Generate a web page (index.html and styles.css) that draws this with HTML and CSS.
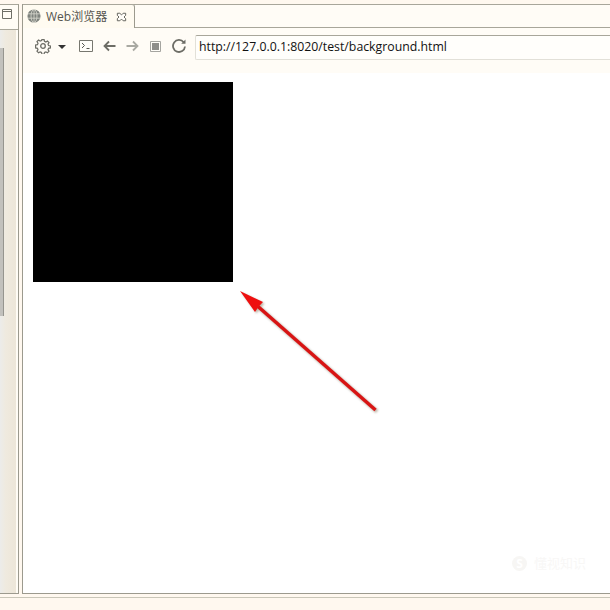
FILE: index.html
```html
<!DOCTYPE html>
<html lang="zh-CN">
<head>
<meta charset="utf-8">
<title>Web浏览器</title>
<link rel="stylesheet" href="styles.css">
</head>
<body>
<div class="workbench">
  <div class="panes">
    <aside class="side">
      <div class="side-head">
        <svg class="icon-restore" width="10" height="10" viewBox="0 0 10 10"><path d="M.5.500h9v9H.5zM.5 2.500h9" fill="none" stroke="#6e6e66"/></svg>
      </div>
      <div class="side-body"><div class="side-scroll"></div></div>
    </aside>
    <main class="main">
      <div class="tabbar">
        <div class="tab">
          <svg width="14" height="14" viewBox="0 0 16 16"><circle cx="8" cy="8" r="7.500" fill="#7f837e"/><g fill="none" stroke="#dcdcd2" stroke-width=".9"><ellipse cx="8" cy="8" rx="3.400" ry="7.500"/><path d="M8 .5v15M1 5.500h14M1 10.500h14"/></g></svg>
          <span class="tab-title">Web浏览器</span>
          <svg class="tab-close" width="11" height="10" viewBox="0 0 13 12"><path d="M1.500 1.500h3l2 2 2-2h3v2.500l-2 2 2 2v2.500h-3l-2-2-2 2h-3V8l2-2-2-2z" fill="#fffdf8" stroke="#66665f" stroke-width="1.200"/></svg>
        </div>
      </div>
      <div class="toolbar">
        <svg class="t-gear" width="16" height="16" viewBox="0 0 16 16"><g fill="none" stroke="#6d6d66" stroke-width="1.300"><circle cx="8" cy="8" r="2.300"/><path d="M6.800 1h2.400l.4 2 1.500.7 1.700-1.100 1.700 1.700-1.100 1.700.6 1.500 2 .4v2.200l-2 .4-.6 1.500 1.100 1.700-1.700 1.700-1.700-1.100-1.500.6-.4 2H6.800l-.4-2-1.500-.6-1.700 1.100-1.700-1.700 1.100-1.700-.6-1.500-2-.4V6.900l2-.4.6-1.500-1.100-1.700 1.700-1.700 1.700 1.100 1.500-.7z" transform="translate(.6 .6) scale(.925)"/></g></svg>
        <svg class="t-drop" width="8" height="4" viewBox="0 0 8 4"><path d="M0 0h8L4 4z" fill="#333"/></svg>
        <svg class="t-term" width="14" height="12" viewBox="0 0 14 12"><path d="M.5.500h13v11H.5z" fill="#fffdf8" stroke="#77776f"/><path d="M3 3l2.500 2.500L3 8M7.500 8.500h3" fill="none" stroke="#55554f"/></svg>
        <svg class="t-back" width="13" height="12" viewBox="0 0 13 12"><path d="M12.500 6H1.500M6 1.500L1.500 6 6 10.500" fill="none" stroke="#6d6d66" stroke-width="1.800"/></svg>
        <svg class="t-fwd" width="13" height="12" viewBox="0 0 13 12"><path d="M.5 6h11M7 1.500L11.500 6 7 10.500" fill="none" stroke="#a9a9a2" stroke-width="1.800"/></svg>
        <svg class="t-stop" width="11" height="11" viewBox="0 0 11 11"><path d="M.5.500h10v10H.5z" fill="#fffdf8" stroke="#a5a5a0"/><path d="M2 2h7v7H2z" fill="#8e8e8a"/></svg>
        <svg class="t-reload" width="14" height="14" viewBox="0 0 14 14"><path d="M11.700 3.200A6 6 0 1 0 13 7.500" fill="none" stroke="#6d6d66" stroke-width="1.800"/><path d="M13.500 .5v4.300H9.200z" fill="#6d6d66"/></svg>
        <div class="url">http://127.0.0.1:8020/test/background.html</div>
      </div>
      <div class="page">
        <div class="box"></div>
      </div>
      <div class="watermark">
        <div class="wm-row"><span class="wm-s">S</span><span class="wm-t">懂视知识</span></div>
      </div>
      <svg class="arrow" width="150" height="130" viewBox="0 0 150 130">
        <defs><filter id="sh" x="-20%" y="-20%" width="140%" height="140%"><feGaussianBlur stdDeviation="1.200"/></filter></defs>
        <g transform="translate(1.500 1.500)" opacity=".5" filter="url(#sh)"><path d="M135.500 119L18 15.500" stroke="#7a6a50" stroke-width="4" fill="none"/><path d="M0 0L23 11 18.700 15.500 15 21z" fill="#7a6a50"/></g>
        <path d="M135.500 119L18 15.500" stroke="#d81414" stroke-width="3.500" fill="none"/>
        <path d="M0 0L23 11 18.700 15.500 15 21z" fill="#ee0f0f"/>
      </svg>
    </main>
  </div>
  <div class="statusbar"></div>
</div>
</body>
</html>
```
FILE: styles.css
```css
html, body { margin: 0; padding: 0; }
body {
  width: 610px;
  height: 610px;
  overflow: hidden;
  background: #fff8ef;
  font-family: "Open Sans", "Noto Sans CJK SC", sans-serif;
}
svg { display: block; flex: none; }
.workbench { height: 610px; display: flex; flex-direction: column; }
.panes {
  display: flex;
  gap: 3px;
  height: 590px;
  margin-top: 4px;
  box-sizing: border-box;
}
.side {
  width: 19px;
  flex: none;
  display: flex;
  flex-direction: column;
  border-top: 1px solid #a8a69a;
  border-right: 1px solid #9c9a8e;
  border-bottom: 1px solid #9c9a8e;
  box-sizing: border-box;
  background: #fffcf5;
}
.side-head {
  height: 25px;
  border-bottom: 1px solid #a8a69a;
  display: flex;
  justify-content: flex-end;
  padding: 4px 6px 0 0;
  box-sizing: border-box;
  flex: none;
}
.side-body {
  flex: 1;
  background: linear-gradient(90deg, #ececea 0, #efeadf 35%, #ede6d8 100%);
  padding-top: 18px;
  border-right: 2px solid #fffcf5;
}
.side-scroll {
  width: 3px;
  height: 268px;
  background: #c2c1bd;
  border-right: 1px solid #96958f;
}
.main {
  flex: 1;
  display: flex;
  flex-direction: column;
  border-left: 1px solid #9c9a8e;
  border-bottom: 1px solid #9c9a8e;
  box-sizing: border-box;
  position: relative;
  background: #fff;
}
.tabbar {
  height: 24px;
  flex: none;
  box-sizing: border-box;
  border-top: 1px solid #a8a69a;
  border-bottom: 1px solid #a8a69a;
  background: #fffcf6;
}
.tab {
  width: 112px;
  height: 24px;
  box-sizing: border-box;
  margin-top: -1px;
  padding: 4px 0 0 4px;
  display: flex;
  align-items: flex-start;
  border-top: 1px solid #a8a69a;
  border-right: 1px solid #9c9a8e;
  border-radius: 0 3px 0 0;
  background: #fffbf1;
  position: relative;
}
.tab-title {
  font-size: 12px;
  line-height: 16px;
  color: #55554f;
  margin-left: 5px;
  white-space: nowrap;
}
.tab-close { margin: 3px 0 0 9px; }
.toolbar {
  height: 45px;
  flex: none;
  background: #fffcf6;
  display: flex;
  align-items: flex-start;
  box-sizing: border-box;
  padding-top: 7px;
}
.t-gear { margin: 3px 0 0 12px; }
.t-drop { margin: 10px 0 0 7px; }
.t-term { margin: 5px 0 0 13px; }
.t-back { margin: 5px 0 0 10px; }
.t-fwd { margin: 5px 0 0 10px; }
.t-stop { margin: 6px 0 0 11px; }
.t-reload { margin: 4px 0 0 11px; }
.url {
  margin-left: 9px;
  flex: 1;
  height: 25px;
  box-sizing: border-box;
  background: #fffefb;
  border: 1px solid #e2e0d8;
  border-top-color: #a8a69a;
  border-right: 0;
  border-radius: 2px 0 0 2px;
  font-size: 12.3px;
  line-height: 21px;
  padding-left: 3px;
  color: #111;
  white-space: nowrap;
}
.page {
  flex: 1;
  padding: 9px 0 0 10px;
}
.box { width: 200px; height: 200px; background: #000; }
.arrow { position: absolute; left: 217px; top: 287px; }
.watermark {
  position: absolute;
  right: 24px;
  bottom: 20px;
  color: #f8f7f6;
}
.wm-row { display: flex; align-items: center; }
.wm-t { font-size: 13px; line-height: 20px; }
.wm-s {
  width: 15px;
  height: 15px;
  border-radius: 50%;
  background: #f7f6f4;
  color: #fff;
  font-size: 12px;
  line-height: 15px;
  text-align: center;
  font-weight: 700;
  margin-right: 7px;
}
.statusbar {
  height: 1px;
  background: #c9c6b8;
  margin-top: 3px;
}
```
